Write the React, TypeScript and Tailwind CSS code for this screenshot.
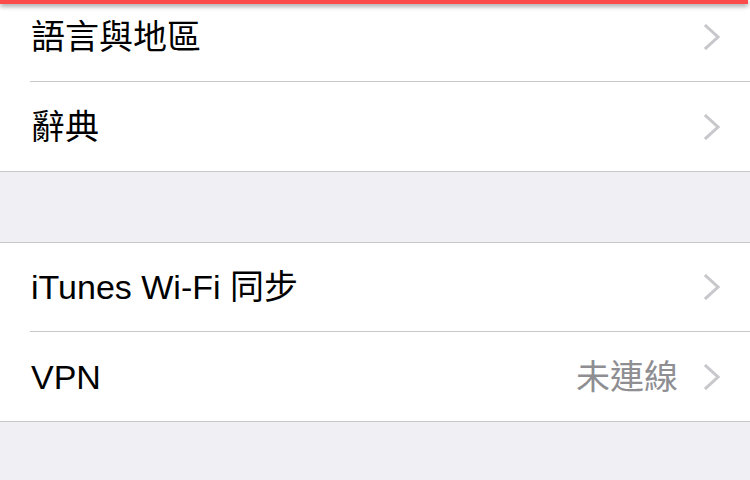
import React from "react";

const font = { fontFamily: '"Liberation Sans", "Noto Sans CJK TC", sans-serif' };

function Chevron() {
  return (
    <svg width="16" height="26" viewBox="0 0 16 26" className="shrink-0">
      <polyline
        points="2,2 14,13 2,24"
        fill="none"
        stroke="#c7c7cc"
        strokeWidth="3"
        strokeLinecap="square"
        strokeLinejoin="miter"
      />
    </svg>
  );
}

function Row({
  label,
  value,
  border,
  h,
}: {
  label: string;
  value?: string;
  border: boolean;
  h: string;
}) {
  return (
    <div className="pl-[30px] bg-white">
      <div
        className={`${h} flex items-center pr-[30px] ${
          border ? "border-b border-[#c8c7cc]" : ""
        }`}
      >
        <span className="flex-1 text-[34px] text-black leading-none pl-[1px]">{label}</span>
        {value && (
          <span className="text-[34px] text-[#8e8e93] leading-none mr-[26px]">{value}</span>
        )}
        <Chevron />
      </div>
    </div>
  );
}

export default function App() {
  return (
    <div className="relative w-[750px] h-[480px] overflow-hidden bg-[#efeff4]" style={font}>
      <div className="-mt-2">
        <div className="bg-white border-b border-[#c8c7cc]">
          <Row label="語言與地區" border h="h-[90px]" />
          <Row label="辭典" border={false} h="h-[89px]" />
        </div>
        <div className="h-[70px]" />
        <div className="bg-white border-t border-b border-[#c8c7cc]">
          <Row label="iTunes Wi-Fi 同步" border h="h-[89px]" />
          <Row label="VPN" value="未連線" border={false} h="h-[89px]" />
        </div>
      </div>
      <div className="absolute top-0 left-0 w-[748px] h-[4px] bg-[#fc4b4b] shadow-[0_2px_5px_rgba(0,0,0,0.45)]" />
    </div>
  );
}
